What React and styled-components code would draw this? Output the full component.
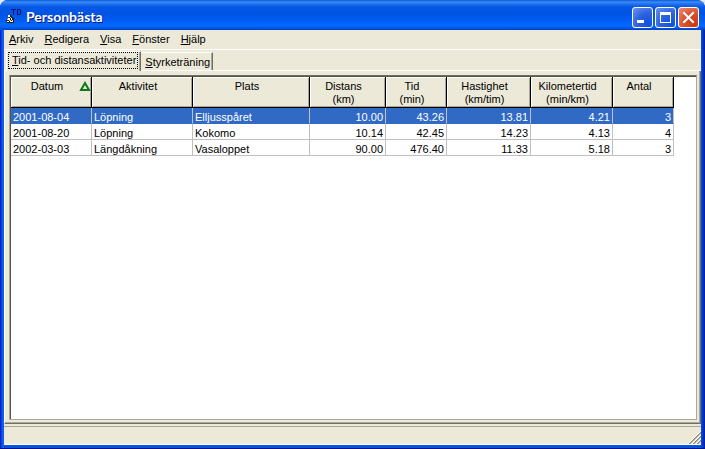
import { useState } from 'react';
import styled, { createGlobalStyle, css } from 'styled-components';

const GlobalStyle = createGlobalStyle`
	* {
		box-sizing: border-box;
	}

	body {
		margin: 0;
		background: #e4e8f2;
		font-family: 'Liberation Sans', Arial, sans-serif;
		font-size: 11px;
		line-height: 13px;
		color: #000;
	}

	button {
		font: inherit;
		color: inherit;
	}
`;

const Window = styled.div`
	height: 100vh;
	display: flex;
	flex-direction: column;
	padding: 0 4px 3px;
	background: linear-gradient(to right, #0019cf 0, #0831d9 1px, #166aee 3px, #0855dd 4px, #0855dd calc(100% - 4px), #0441d8 calc(100% - 3px), #001ea0 100%);
	border-bottom: 1px solid #00138c;
	border-radius: 8px 8px 0 0;
	overflow: hidden;
`;

const TitleBar = styled.header`
	flex: none;
	height: 30px;
	margin: 0 -4px;
	padding: 4px 6px 0 5px;
	display: flex;
	align-items: center;
	gap: 4px;
	background: linear-gradient(
		to bottom,
		#0958d6 0,
		#3c8cf8 2px,
		#2071ee 4px,
		#0558e4 7px,
		#0054e3 14px,
		#005af0 19px,
		#0268fe 25px,
		#0162f5 27px,
		#0040bd 30px
	);
`;

const Title = styled.h1`
	flex: 1;
	margin: 0;
	font-family: Lato, sans-serif;
	font-size: 14px;
	line-height: 20px;
	font-weight: 700;
	color: #fff;
	text-shadow: 1px 1px #0a1883;
`;

const TitleButtons = styled.div`
	display: flex;
	gap: 2px;
`;

const TitleButton = styled.button`
	width: 21px;
	height: 21px;
	padding: 0;
	border: 1px solid #fff;
	border-radius: 3px;
	background: ${({ $close }) =>
		$close
			? 'radial-gradient(circle at 80% 85%, #c93a10, #dd5030 50%, #eb8d72)'
			: 'radial-gradient(circle at 80% 85%, #0f52e0, #2d62dd 50%, #6f95ee)'};

	svg {
		display: block;
	}
`;

const Body = styled.div`
	flex: 1;
	min-height: 0;
	display: flex;
	flex-direction: column;
	background: #ece9d8;
`;

const MenuBar = styled.nav`
	flex: none;
	height: 20px;
	padding-left: 5px;
	display: flex;
	gap: 11px;
	border-bottom: 1px solid #fff;
`;

const MenuItem = styled.button`
	padding: 0;
	border: 0;
	background: none;
`;

const TabList = styled.div`
	flex: none;
	height: 21px;
	padding: 1px 0 0 2px;
	display: flex;
	align-items: flex-end;
	box-shadow: inset 0 -1px #fff;
`;

const Tab = styled.button`
	height: 18px;
	padding: 1px 2px 0 4px;
	border: 0;
	border-top: 1px solid #fff;
	border-right: 1px solid #716f64;
	box-shadow: inset -1px 0 #aca899;
	background: #ece9d8;
	margin-bottom: 1px;

	${({ $active }) =>
		$active &&
		css`
			height: 20px;
			padding: 0 2px 2px 1px;
			border-left: 1px solid #fff;
			margin-bottom: 0;
		`}
`;

const TabLabel = styled.span`
	display: block;
	line-height: 15px;

	${({ $focused }) =>
		$focused &&
		css`
			padding: 0 1px 0 3px;
			border: 1px dotted #000;
		`}
`;

const TabPage = styled.main`
	flex: 1;
	min-height: 0;
	display: flex;
	padding: 4px 3px 3px 4px;
	border-left: 1px solid #fff;
	border-right: 1px solid #716f64;
	border-bottom: 1px solid #716f64;
	box-shadow: inset -1px -1px #aca899;
`;

const GridFrame = styled.div`
	flex: 1;
	min-width: 0;
	overflow: auto;
	background: #fff;
	border: 1px solid;
	border-color: #716f64 #aca899 #aca899;
	box-shadow: inset 1px 1px #55534a;
	padding: 1px 0 0 1px;
`;

const Table = styled.table`
	width: 663px;
	table-layout: fixed;
	border-collapse: separate;
	border-spacing: 0;
`;

const HeadCell = styled.th`
	height: 31px;
	padding: 3px 8px 0 0;
	position: relative;
	vertical-align: top;
	font-weight: 400;
	text-align: center;
	white-space: pre-line;
	background: #ece9d8;
	border-right: 1px solid #000;
	border-bottom: 1px solid #000;
	box-shadow: inset 1px 1px #fff, inset -1px -1px #aca899;
`;

const SortMark = styled.svg`
	position: absolute;
	top: 4px;
	right: 0;
`;

const Cell = styled.td`
	height: 16px;
	padding: 3px 2px 0;
	line-height: 12px;
	text-align: ${({ $numeric }) => ($numeric ? 'right' : 'left')};
	white-space: nowrap;
	border-right: 1px solid #c0c0c0;
	border-bottom: 1px solid #c0c0c0;
`;

const Row = styled.tr`
	${({ $selected }) =>
		$selected &&
		css`
			background: #316ac5;
			color: #fff;

			${Cell} {
				border-bottom-color: #316ac5;
			}
		`}
`;

const StatusBar = styled.footer`
	flex: none;
	height: 19px;
	margin-top: 2px;
	display: flex;
	justify-content: flex-end;
	align-items: flex-end;
	border-top: 1px solid #aca899;
	border-bottom: 1px solid #fff;
`;

const menus = ['Arkiv', 'Redigera', 'Visa', 'Fönster', 'Hjälp'];
const tabs = ['Tid- och distansaktiviteter', 'Styrketräning'];

const columns = [
	{ title: 'Datum', width: 81, sorted: true },
	{ title: 'Aktivitet', width: 101 },
	{ title: 'Plats', width: 117 },
	{ title: 'Distans\n(km)', width: 76, numeric: true },
	{ title: 'Tid\n(min)', width: 61, numeric: true },
	{ title: 'Hastighet\n(km/tim)', width: 84, numeric: true },
	{ title: 'Kilometertid\n(min/km)', width: 82, numeric: true },
	{ title: 'Antal', width: 61, numeric: true },
];

const records = [
	['2001-08-04', 'Löpning', 'Elljusspåret', '10.00', '43.26', '13.81', '4.21', '3'],
	['2001-08-20', 'Löpning', 'Kokomo', '10.14', '42.45', '14.23', '4.13', '4'],
	['2002-03-03', 'Längdåkning', 'Vasaloppet', '90.00', '476.40', '11.33', '5.18', '3'],
];

const Mnemonic = ({ text }) => (
	<>
		<u>{text[0]}</u>
		{text.slice(1)}
	</>
);

const AppIcon = () => (
	<svg width="17" height="18" viewBox="0 0 17 18" aria-hidden="true">
		<path d="M6 1h5v1H9v5H8V2H6zM12 1h3l1 1v4l-1 1h-3zM13 2v4h2V2z" fill="#04105c" fillRule="evenodd" />
		<path d="M3 7h3l1 2 2 1v5H2l-1-2 1-2 2-1z" fill="#202018" />
		<path d="M3 7h2v2H3zM3 10h2v2H2zM6 10h1v2H6zM2 13h2v1H2zM5 13h3v1H5z" fill="#fff" />
		<path d="M5 9h1v1H5zM4 12h2v1H4zM7 12h1v1H7z" fill="#d8cf72" />
	</svg>
);

const App = () => {
	const [activeTab, setActiveTab] = useState(0);
	const [selected, setSelected] = useState(0);

	return (
		<>
			<GlobalStyle />
			<Window>
				<TitleBar>
					<AppIcon />
					<Title>Personbästa</Title>
					<TitleButtons>
						<TitleButton aria-label="Minimera">
							<svg width="19" height="19">
								<path d="M4 12h7v3H4z" fill="#fff" />
							</svg>
						</TitleButton>
						<TitleButton aria-label="Maximera">
							<svg width="19" height="19">
								<path d="M4 4h11v11H4zM5 7v7h9V7z" fill="#fff" fillRule="evenodd" />
							</svg>
						</TitleButton>
						<TitleButton $close aria-label="Stäng">
							<svg width="19" height="19">
								<path d="M5 5l9 9M14 5l-9 9" stroke="#fff" strokeWidth="2" strokeLinecap="square" />
							</svg>
						</TitleButton>
					</TitleButtons>
				</TitleBar>

				<Body>
					<MenuBar>
						{menus.map((menu) => (
							<MenuItem key={menu}>
								<Mnemonic text={menu} />
							</MenuItem>
						))}
					</MenuBar>

					<TabList role="tablist">
						{tabs.map((tab, i) => (
							<Tab
								key={tab}
								role="tab"
								aria-selected={i === activeTab}
								$active={i === activeTab}
								onClick={() => setActiveTab(i)}
							>
								<TabLabel $focused={i === activeTab}>
									<Mnemonic text={tab} />
								</TabLabel>
							</Tab>
						))}
					</TabList>

					<TabPage role="tabpanel">
						<GridFrame>
							<Table>
								<colgroup>
									{columns.map(({ title, width }) => (
										<col key={title} width={width} />
									))}
								</colgroup>
								<thead>
									<tr>
										{columns.map(({ title, sorted }) => (
											<HeadCell key={title} scope="col">
												{title}
												{sorted && (
													<SortMark width="12" height="11" aria-hidden="true">
														<path d="M6 2L2 9h8z" fill="#ece9d8" stroke="#0a7a1c" strokeWidth="2" />
													</SortMark>
												)}
											</HeadCell>
										))}
									</tr>
								</thead>
								<tbody>
									{records.map((record, i) => (
										<Row key={record[0]} $selected={i === selected} onClick={() => setSelected(i)}>
											{record.map((value, j) => (
												<Cell key={columns[j].title} $numeric={columns[j].numeric}>
													{value}
												</Cell>
											))}
										</Row>
									))}
								</tbody>
							</Table>
						</GridFrame>
					</TabPage>

					<StatusBar>
						<svg width="13" height="13" aria-hidden="true">
							<path d="M0 13L13 0M4 13l9-9M8 13l5-5" stroke="#fff" />
							<path d="M1 13L13 1M5 13l8-8M9 13l4-4" stroke="#8f8b7c" />
							<path d="M2 13L13 2M6 13l7-7M10 13l3-3" stroke="#aca899" />
						</svg>
					</StatusBar>
				</Body>
			</Window>
		</>
	);
};

export default App;
